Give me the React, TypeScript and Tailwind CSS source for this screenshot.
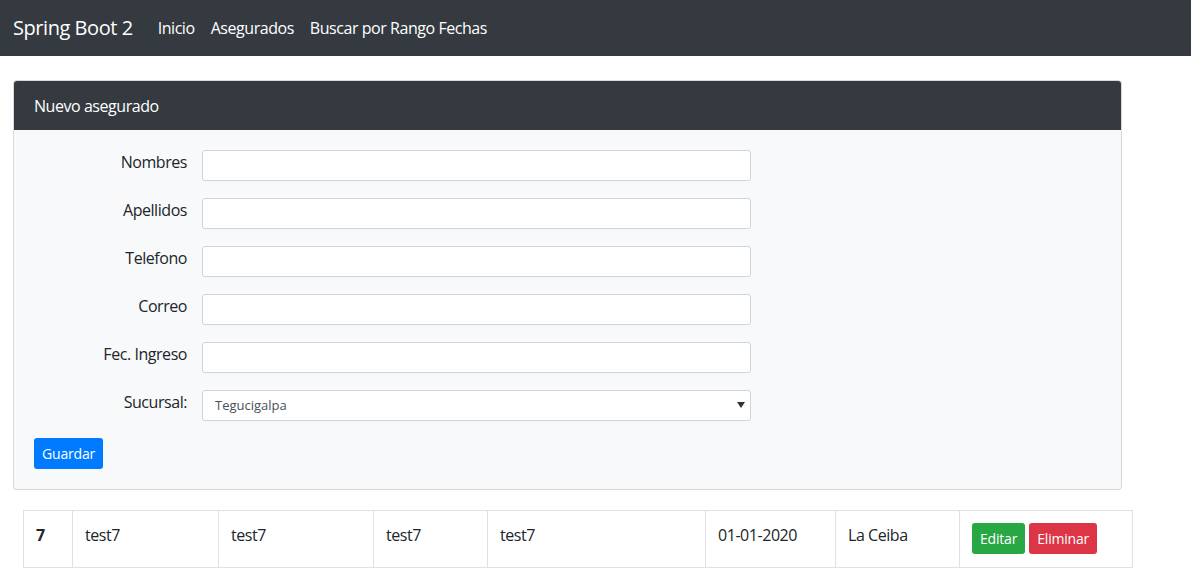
import { FC } from 'react'

const fields = ['Nombres', 'Apellidos', 'Telefono', 'Correo', 'Fec. Ingreso']

const cols = [
  { w: 'w-[49px]', text: '7', bold: true },
  { w: 'w-[146px]', text: 'test7' },
  { w: 'w-[155px]', text: 'test7' },
  { w: 'w-[114px]', text: 'test7' },
  { w: 'w-[218px]', text: 'test7' },
  { w: 'w-[130px]', text: '01-01-2020' },
  { w: 'w-[124px]', text: 'La Ceiba' }
]

const Navbar: FC = () => (
  <nav className="h-[56px] bg-[#343a40] flex items-center px-[13px]">
    <span className="text-[20px] text-white mr-[17px] leading-[30px]">Spring Boot 2</span>
    <div className="flex items-center">
      {['Inicio', 'Asegurados', 'Buscar por Rango Fechas'].map(item => (
        <a key={item} className="px-[8px] text-[16px] text-white leading-6">
          {item}
        </a>
      ))}
    </div>
  </nav>
)

const FormRow: FC<{ label: string; children: React.ReactNode }> = ({ label, children }) => (
  <div className="flex items-start mb-[17px]">
    <label className="w-[153px] text-right leading-6 text-[16px] text-[#212529]">{label}</label>
    <div className="ml-[15px] w-[549px]">{children}</div>
  </div>
)

export default function App() {
  return (
    <div
      className="min-h-screen bg-white text-[#212529] tracking-[-0.028em]"
      style={{ fontFamily: '"Segoe UI", "Open Sans", sans-serif' }}
    >
      <Navbar />

      <div className="pt-[24px] pl-[13px] w-[1122px]">
        <div className="rounded-[4px] border border-[rgba(0,0,0,0.125)] bg-[#f8f9fa] overflow-hidden">
          <div className="bg-[#343a40] h-[49px] px-[20px] flex items-center text-white text-[16px]">
            Nuevo asegurado
          </div>
          <div className="p-[20px]">
            {fields.map(f => (
              <FormRow key={f} label={f}>
                <input className="block w-full h-[31px] rounded-[3px] border border-[#ced4da] bg-white px-2 text-[14px]" />
              </FormRow>
            ))}
            <FormRow label="Sucursal:">
              <div className="relative">
                <select className="block w-full h-[31px] appearance-none rounded-[3px] border border-[#ced4da] bg-white pl-[12px] text-[13px] text-[#495057] tracking-normal">
                  <option>Tegucigalpa</option>
                </select>
                <span className="pointer-events-none absolute right-[6px] top-[12px] w-0 h-0 border-l-[4px] border-r-[4px] border-t-[6px] border-l-transparent border-r-transparent border-t-[#333]" />
              </div>
            </FormRow>
            <button className="block h-[31px] px-[8px] rounded-[3px] bg-[#007bff] text-white text-[14px] tracking-[-0.012em]">
              Guardar
            </button>
          </div>
        </div>
      </div>

      <div className="pt-[20px] pl-[23px]">
        <table className="border-collapse text-[16px]">
          <tbody>
            <tr>
              {cols.map((c, i) => (
                <td
                  key={i}
                  className={`${c.w} h-[57px] align-top border border-[#dee2e6] px-[12px] pt-[12px] leading-6 ${c.bold ? 'font-bold' : ''}`}
                >
                  {c.text}
                </td>
              ))}
              <td className="w-[173px] h-[57px] align-top border border-[#dee2e6] px-[12px] pt-[12px]">
                <div className="flex gap-[4px] tracking-[-0.012em]">
                  <button className="h-[31px] px-[8px] rounded-[3px] bg-[#28a745] text-white text-[14px]">Editar</button>
                  <button className="h-[31px] px-[8px] rounded-[3px] bg-[#dc3545] text-white text-[14px]">Eliminar</button>
                </div>
              </td>
            </tr>
          </tbody>
        </table>
      </div>
    </div>
  )
}
